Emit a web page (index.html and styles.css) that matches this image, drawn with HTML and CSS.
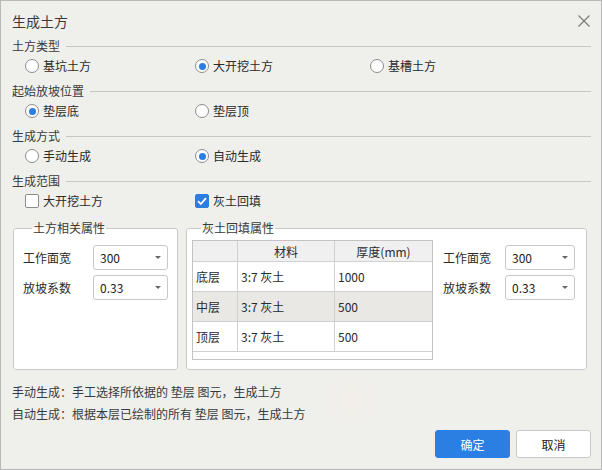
FILE: index.html
```html
<!DOCTYPE html>
<html lang="zh">
<head>
<meta charset="utf-8">
<title>生成土方</title>
<link rel="stylesheet" href="styles.css">
</head>
<body>
<div class="dialog">
  <div class="titlebar">
    <span class="title">生成土方</span>
    <svg class="close" width="14" height="14" viewBox="0 0 14 14"><path d="M1.5 1.5 L12.5 12.5 M12.5 1.5 L1.5 12.5" stroke="#7a7a7a" stroke-width="1.2" fill="none"/></svg>
  </div>

  <div class="sec">
    <div class="sec-head"><span>土方类型</span><i class="rule"></i></div>
    <div class="opts">
      <label class="opt c1"><span class="radio"></span>基坑土方</label>
      <label class="opt c2"><span class="radio on"></span>大开挖土方</label>
      <label class="opt"><span class="radio"></span>基槽土方</label>
    </div>
  </div>

  <div class="sec">
    <div class="sec-head"><span>起始放坡位置</span><i class="rule"></i></div>
    <div class="opts">
      <label class="opt c1"><span class="radio on"></span>垫层底</label>
      <label class="opt c2"><span class="radio"></span>垫层顶</label>
    </div>
  </div>

  <div class="sec">
    <div class="sec-head"><span>生成方式</span><i class="rule"></i></div>
    <div class="opts">
      <label class="opt c1"><span class="radio"></span>手动生成</label>
      <label class="opt c2"><span class="radio on"></span>自动生成</label>
    </div>
  </div>

  <div class="sec">
    <div class="sec-head"><span>生成范围</span><i class="rule"></i></div>
    <div class="opts">
      <label class="opt c1"><span class="check"></span>大开挖土方</label>
      <label class="opt c2"><span class="check on"><svg width="14" height="14" viewBox="0 0 14 14"><path d="M3 7.2 L5.8 10 L11 4.2" stroke="#fff" stroke-width="1.8" fill="none"/></svg></span>灰土回填</label>
    </div>
  </div>

  <div class="groups">
    <fieldset class="group left">
      <legend>土方相关属性</legend>
      <div class="props">
        <span class="plabel">工作面宽</span>
        <div class="select"><span>300</span><i class="arrow"></i></div>
        <span class="plabel">放坡系数</span>
        <div class="select"><span>0.33</span><i class="arrow"></i></div>
      </div>
    </fieldset>
    <fieldset class="group right">
      <legend>灰土回填属性</legend>
      <div class="rightwrap">
        <div class="tablebox">
          <table class="grid">
            <thead>
              <tr><th class="k"></th><th class="m">材料</th><th class="t">厚度(mm)</th></tr>
            </thead>
            <tbody>
              <tr><td>底层</td><td>3:7 灰土</td><td>1000</td></tr>
              <tr class="sel"><td>中层</td><td>3:7 灰土</td><td>500</td></tr>
              <tr><td>顶层</td><td>3:7 灰土</td><td>500</td></tr>
            </tbody>
          </table>
        </div>
        <div class="props props-r">
          <span class="plabel">工作面宽</span>
          <div class="select"><span>300</span><i class="arrow"></i></div>
          <span class="plabel">放坡系数</span>
          <div class="select"><span>0.33</span><i class="arrow"></i></div>
        </div>
      </div>
    </fieldset>
  </div>

  <div class="notes">
    <p>手动生成：手工选择所依据的 垫层 图元，生成土方</p>
    <p>自动生成：根据本层已绘制的所有 垫层 图元，生成土方</p>
  </div>

  <div class="buttons">
    <button class="btn primary">确定</button>
    <button class="btn">取消</button>
  </div>
</div>
</body>
</html>
```

FILE: styles.css
```css
html, body {
  margin: 0;
  padding: 0;
}
body {
  width: 602px;
  height: 470px;
  font-family: "Microsoft YaHei", "Noto Sans CJK SC", "Noto Sans", sans-serif;
  font-size: 12px;
  color: #333;
}
.dialog {
  box-sizing: border-box;
  width: 602px;
  height: 470px;
  border: 1px solid #b8b8b8;
  background:
    radial-gradient(circle at 350px 400px, rgba(248, 238, 226, 0.35), rgba(248, 238, 226, 0) 30px),
    radial-gradient(circle at 210px 260px, rgba(248, 238, 226, 0.3), rgba(248, 238, 226, 0) 30px),
    #efefec;
}
.titlebar {
  box-sizing: border-box;
  height: 36px;
  padding: 3px 10px 0 11px;
  display: flex;
  align-items: center;
  justify-content: space-between;
}
.title {
  font-size: 14px;
  line-height: 18px;
  color: #3a3a3a;
}
.close { display: block; }

.sec { margin-bottom: 5px; }
.sec-head {
  display: flex;
  align-items: center;
  height: 18px;
  line-height: 18px;
  padding: 0 10px 0 11px;
  color: #3a3a3a;
}
.rule {
  flex: 1;
  height: 1px;
  background: #c6c6c6;
  margin-left: 6px;
}
.opts {
  display: flex;
  align-items: center;
  height: 22px;
  padding-left: 24px;
}
.opt {
  display: flex;
  align-items: center;
  gap: 4px;
  line-height: 16px;
  color: #2a2a2a;
}
.c1 { width: 170px; }
.c2 { width: 175px; }
.radio {
  box-sizing: border-box;
  width: 14px;
  height: 14px;
  border: 1px solid #8c8c8c;
  border-radius: 50%;
  background: #fff;
  display: flex;
  align-items: center;
  justify-content: center;
}
.radio.on::after {
  content: "";
  width: 7px;
  height: 7px;
  border-radius: 50%;
  background: #2b7de1;
}
.check {
  box-sizing: border-box;
  width: 14px;
  height: 14px;
  border: 1px solid #8c8c8c;
  border-radius: 2px;
  background: #fff;
  display: flex;
}
.check.on {
  background: #2b7de1;
  border-color: #2b7de1;
}
.check svg { display: block; margin: -1px; }

.groups {
  display: flex;
  gap: 8px;
  margin: 8px 0 0 12px;
  height: 150px;
}
.group {
  margin: 0;
  padding: 0;
  min-width: 0;
  border: 1px solid #c9c9c9;
  border-radius: 3px;
  background: #fff;
  box-sizing: border-box;
}
.group legend {
  padding: 0 1px;
  margin-left: 9px;
  font-size: 12px;
  line-height: 16px;
  color: #3a3a3a;
}
.left {
  width: 165px;
  padding: 9px 9px 0 9px;
}
.right {
  width: 401px;
  padding: 4px 5px 0 5px;
}
.props {
  display: grid;
  grid-template-columns: 70px 75px;
  grid-auto-rows: 25px;
  row-gap: 5px;
  align-items: center;
}
.plabel {
  line-height: 16px;
  color: #2a2a2a;
}
.select {
  box-sizing: border-box;
  height: 25px;
  border: 1px solid #c8c8c8;
  border-radius: 3px;
  background: #fff;
  display: flex;
  align-items: center;
  justify-content: space-between;
  padding: 0 6px 0 6px;
  color: #222;
}
.arrow {
  width: 0;
  height: 0;
  border-left: 3px solid transparent;
  border-right: 3px solid transparent;
  border-top: 3px solid #666;
}
.rightwrap {
  display: flex;
  align-items: flex-start;
}
.tablebox {
  box-sizing: border-box;
  width: 241px;
  height: 120px;
  border: 1px solid #c3c3c3;
  background: #fff;
}
.grid {
  border-collapse: collapse;
  width: 239px;
  table-layout: fixed;
}
.grid th, .grid td {
  border: 1px solid #d0d0d0;
  padding: 0 0 0 3px;
  text-align: left;
  font-weight: normal;
  color: #2a2a2a;
}
.grid tr:first-child th { border-top: none; }
.grid th:first-child, .grid td:first-child { border-left: none; }
.grid th:last-child, .grid td:last-child { border-right: none; }
.grid th {
  height: 20px;
  background: #f0f0f0;
  text-align: center;
  padding: 0;
}
.grid td { height: 29px; }
.grid .k { width: 44px; }
.grid .m { width: 96px; }
.grid tr.sel td { background: #e9e8e5; }
.props-r {
  grid-template-columns: 62px 70px;
  margin: 5px 0 0 10px;
}

.notes {
  margin: 11px 0 0 11px;
}
.notes p {
  margin: 0;
  line-height: 22px;
  color: #3a3a3a;
}
.buttons {
  display: flex;
  justify-content: flex-end;
  gap: 6px;
  margin: 5px 10px 0 0;
}
.btn {
  box-sizing: border-box;
  width: 75px;
  height: 28px;
  border: 1px solid #c8c8c8;
  border-radius: 3px;
  background: #fff;
  font-family: inherit;
  font-size: 12px;
  color: #222;
  padding: 0;
}
.btn.primary {
  background: #2b7fe2;
  border-color: #2b7fe2;
  color: #fff;
}
```
